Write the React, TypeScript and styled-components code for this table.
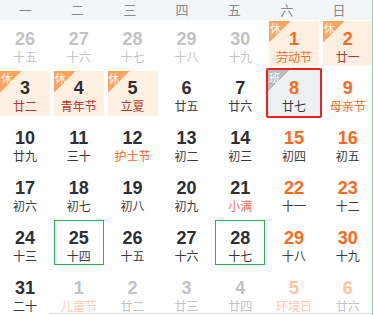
import React from "react";
import styled, { createGlobalStyle, css } from "styled-components";

const Global = createGlobalStyle`
  html, body { margin: 0; padding: 0; background: #fff; overflow: hidden; }
  body { font-family: "Liberation Sans", "Noto Sans CJK SC", Arial, sans-serif; }
`;

type Day = {
  n: number;
  l: string;
  other?: boolean;
  weekend?: boolean;
  rest?: boolean;
  work?: boolean;
  fest?: "major" | "term";
  today?: boolean;
  sel?: boolean;
};

const weeks: Day[][] = [
  [
    { n: 26, l: "十五", other: true },
    { n: 27, l: "十六", other: true },
    { n: 28, l: "十七", other: true },
    { n: 29, l: "十八", other: true },
    { n: 30, l: "十九", other: true },
    { n: 1, l: "劳动节", weekend: true, rest: true, fest: "major" },
    { n: 2, l: "廿一", weekend: true, rest: true },
  ],
  [
    { n: 3, l: "廿二", rest: true },
    { n: 4, l: "青年节", rest: true },
    { n: 5, l: "立夏", rest: true },
    { n: 6, l: "廿五" },
    { n: 7, l: "廿六" },
    { n: 8, l: "廿七", weekend: true, work: true, sel: true },
    { n: 9, l: "母亲节", weekend: true, fest: "major" },
  ],
  [
    { n: 10, l: "廿九" },
    { n: 11, l: "三十" },
    { n: 12, l: "护士节", fest: "major" },
    { n: 13, l: "初二" },
    { n: 14, l: "初三" },
    { n: 15, l: "初四", weekend: true },
    { n: 16, l: "初五", weekend: true },
  ],
  [
    { n: 17, l: "初六" },
    { n: 18, l: "初七" },
    { n: 19, l: "初八" },
    { n: 20, l: "初九" },
    { n: 21, l: "小满", fest: "term" },
    { n: 22, l: "十一", weekend: true },
    { n: 23, l: "十二", weekend: true },
  ],
  [
    { n: 24, l: "十三" },
    { n: 25, l: "十四", today: true },
    { n: 26, l: "十五" },
    { n: 27, l: "十六" },
    { n: 28, l: "十七", today: true },
    { n: 29, l: "十八", weekend: true },
    { n: 30, l: "十九", weekend: true },
  ],
  [
    { n: 31, l: "二十" },
    { n: 1, l: "儿童节", other: true, fest: "major" },
    { n: 2, l: "廿二", other: true },
    { n: 3, l: "廿三", other: true },
    { n: 4, l: "廿四", other: true },
    { n: 5, l: "环境日", other: true, weekend: true, fest: "major" },
    { n: 6, l: "廿六", other: true, weekend: true },
  ],
];

const heads = ["一", "二", "三", "四", "五", "六", "日"];

const Page = styled.div`
  position: relative;
  width: 373px;
  height: 315px;
  overflow: hidden;
  border-right: 1px solid #8fd9a4;
  box-sizing: border-box;
`;

const Head = styled.div`
  display: grid;
  grid-template-columns: repeat(7, 52.3px);
  height: 20px;
  margin-left: -1px;
  background: #f3f6f8;
`;

const HeadCell = styled.div`
  font-family: "Noto Sans CJK SC", sans-serif;
  font-size: 13px;
  line-height: 20px;
  color: #8a8a8a;
  text-align: center;
`;

const Grid = styled.div`
  display: grid;
  grid-template-columns: repeat(7, 50px);
  grid-auto-rows: 45px;
  column-gap: 3.8px;
  row-gap: 4.8px;
  padding-top: 1.2px;
`;

const Cell = styled.div<{ $rest?: boolean; $work?: boolean; $today?: boolean; $sel?: boolean }>`
  position: relative;
  box-sizing: border-box;
  padding-top: 7.5px;
  text-align: center;
  ${(p) => p.$rest && css`background: #fff0e1;`}
  ${(p) => p.$work && css`background: #eef1f4;`}
  ${(p) =>
    p.$today &&
    css`
      border: 1px solid #2bb155;
      padding-top: 6.5px;
    `}
  ${(p) =>
    p.$sel &&
    css`
      margin: -3px -3px -2px -3px;
      border: 2px solid #f2201c;
      border-radius: 2px;
      padding-top: 8.5px;
    `}
`;

const Num = styled.div<{ $c: string }>`
  font-family: "Liberation Sans", Arial, sans-serif;
  font-weight: bold;
  font-size: 18px;
  line-height: 20px;
  color: ${(p) => p.$c};
`;

const Lunar = styled.div<{ $c: string }>`
  font-family: "Noto Sans CJK SC", sans-serif;
  font-size: 12px;
  line-height: 16px;
  color: ${(p) => p.$c};
`;

const Badge = styled.div<{ $bg: string }>`
  position: absolute;
  left: 0;
  top: 0;
  width: 22px;
  height: 21px;
  background: linear-gradient(to bottom right, ${(p) => p.$bg} 50%, transparent 50%);
  color: #fff;
  font-family: "Noto Sans CJK SC", sans-serif;
  font-size: 11px;
  line-height: 12px;
  padding: 1px 0 0 1px;
  box-sizing: border-box;
  text-align: left;
`;

const BottomLine = styled.div`
  position: absolute;
  left: 49px;
  right: 0;
  bottom: 1px;
  height: 1px;
  background: #dcdcdc;
`;

const ORANGE = "#fd6a1a";
const DARK = "#2e2e36";

function numColor(d: Day) {
  if (d.other) return d.weekend ? "#ffc4a0" : "#c2c2c6";
  if (d.weekend) return ORANGE;
  return DARK;
}

function lunarColor(d: Day) {
  if (d.other) return d.fest ? "#ffcbb0" : "#c4c4c8";
  if (d.fest === "major") return ORANGE;
  if (d.fest === "term") return "#f7715e";
  if (d.rest) return "#b7352d";
  return "#3a3a40";
}

export default function App() {
  return (
    <>
      <Global />
      <Page>
        <Head>
          {heads.map((h) => (
            <HeadCell key={h}>{h}</HeadCell>
          ))}
        </Head>
        <Grid>
          {weeks.flat().map((d, i) => (
            <Cell key={i} $rest={d.rest} $work={d.work} $today={d.today} $sel={d.sel}>
              {d.rest && <Badge $bg="#ffa35f">休</Badge>}
              {d.work && <Badge $bg="#b6bdc5">班</Badge>}
              <Num $c={numColor(d)}>{d.n}</Num>
              <Lunar $c={lunarColor(d)}>{d.l}</Lunar>
            </Cell>
          ))}
        </Grid>
        <BottomLine />
      </Page>
    </>
  );
}
